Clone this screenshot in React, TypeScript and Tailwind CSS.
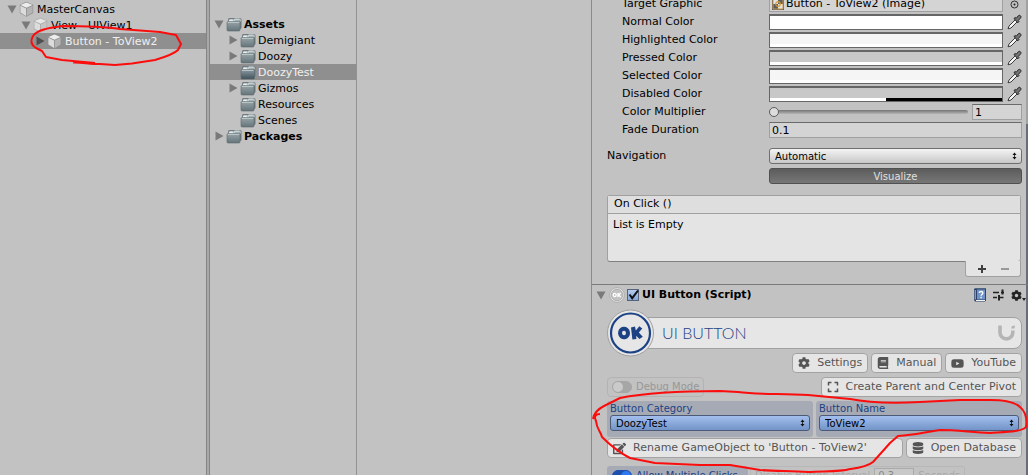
import React, { useState } from "react";
import { FaBook, FaCog, FaDatabase, FaEdit, FaExpand, FaYoutube } from "react-icons/fa";

function Arrow({ open, dark }: { open?: boolean; dark?: boolean }) {
  return (
    <svg viewBox="0 0 10 10" className={`size-[10px] shrink-0 ${dark ? "fill-[#4f4f4f]" : "fill-[#7a7a7a]"}`} aria-hidden="true">
      {open ? <path d="M0.5 1.5h9L5 9.5z" /> : <path d="M1.5 0.5v9L9.5 5z" />}
    </svg>
  );
}

function Cube({ faded }: { faded?: boolean }) {
  return (
    <svg viewBox="0 0 16 16" className="size-4 shrink-0" aria-hidden="true">
      <path d="M7.500 0.800l6.700 2.900v8.300l-6.700 3.800L0.800 12V3.700z" fill={faded ? "#a8a8a8" : "#8e8e8e"} />
      <path d="M7.500 1.500l6 2.500-6 2.800-6-2.800z" fill={faded ? "#e6e6e6" : "#ededed"} />
      <path d="M1.400 4.700l5.700 2.700v7.500l-5.700-3.300z" fill="#dcdcdc" />
      <path d="M13.600 4.700L7.900 7.400v7.500l5.700-3.300z" fill={faded ? "#c6c6c6" : "#b4b4b4"} />
    </svg>
  );
}

function Folder({ open }: { open?: boolean }) {
  return (
    <svg viewBox="0 0 16 16" className="size-4 shrink-0" aria-hidden="true">
      <defs>
        <linearGradient id="folderFill" x1="0" y1="0" x2="0" y2="1">
          <stop offset="0" stopColor="#98a5a8" />
          <stop offset="1" stopColor="#64747a" />
        </linearGradient>
        <linearGradient id="folderOpenFill" x1="0" y1="0" x2="0" y2="1">
          <stop offset="0" stopColor="#8a9ba3" />
          <stop offset="1" stopColor="#41525b" />
        </linearGradient>
      </defs>
      <rect x="2" y="2" width="13.500" height="11" rx="1.500" fill="#6d7a7f" />
      <path d="M3 4.500L4 3h3.500l1-.5h5.500l1 .8v2.200H3z" fill="#a5b0b3" />
      <path d="M2.500 5.500L3.500 3.500h3L7.500 5.500z" fill="#e6ebec" />
      <path d="M7.500 5.500L9 3.200h4.500" fill="none" stroke="#d6dddf" />
      <rect x="1" y="5.500" width={open ? "13.500" : "13"} height="9.500" rx="1" fill={open ? "url(#folderOpenFill)" : "url(#folderFill)"} stroke="#5a686d" strokeWidth="0.600" />
      <path d="M1.800 6.300h11.500" stroke="#c3cdcf" strokeWidth="1" />
    </svg>
  );
}

function Pipette() {
  return (
    <button type="button" aria-label="Pick color" className="flex h-4 w-[15px] shrink-0 items-center justify-center">
      <svg viewBox="0 0 15 16" className="h-4 w-[15px]" aria-hidden="true">
        <path d="M1 14.800l1-2.800 6.500-6.500 2 2L4 14z" fill="#f6f6f6" stroke="#3b3b3b" strokeWidth="1" />
        <path d="M7 4.500l1.200-1 1 .8 2.300-2.700c1-1 3.300.7 2.200 2.200L11.200 6.500l.8 1-1.200 1.300z" fill="#777" stroke="#222" strokeWidth="1" />
      </svg>
    </button>
  );
}

function UpDown() {
  return (
    <svg viewBox="0 0 5 8" className="pointer-events-none absolute top-1 right-[5px] h-2 w-[5px]" aria-hidden="true">
      <path d="M0.500 3L2.500 0.500 4.500 3zM0.500 5L2.500 7.500 4.500 5z" fill="#111" />
      <path d="M2.500 2v4" stroke="#111" strokeWidth="0.800" />
    </svg>
  );
}

function Dropdown({ id, value, blue }: { id: string; value: string; blue?: boolean }) {
  return (
    <div className="relative w-full">
      <select
        id={id}
        defaultValue={value}
        className={`block h-4 w-full appearance-none rounded-[3px] border px-[5px] text-[10px] leading-[13px] text-black ${
          blue
            ? "border-[#4c5a77] bg-linear-to-b from-[#a3bfee] to-[#7394c8]"
            : "border-[#6f6f6f] bg-linear-to-b from-[#f4f4f4] to-[#c8c8c8]"
        }`}
      >
        <option>{value}</option>
      </select>
      <UpDown />
    </div>
  );
}

function Row({ label, id, children }: { label: string; id: string; children: React.ReactNode }) {
  return (
    <div className="flex h-4 items-center">
      <label htmlFor={id} className="w-[147px] shrink-0 leading-[18px]">
        {label}
      </label>
      <div className="flex min-w-0 flex-1 items-center gap-1">{children}</div>
    </div>
  );
}

const fieldBox = "h-4 border border-[#a0a0a0] border-t-[#6a6a6a] bg-[#d4d4d4] px-[2px] leading-[14px]";

const colors = [
  { label: "Normal Color", fill: "bg-white", alpha: "w-full" },
  { label: "Highlighted Color", fill: "bg-[#f5f5f5]", alpha: "w-full" },
  { label: "Pressed Color", fill: "bg-[#c8c8c8]", alpha: "w-full" },
  { label: "Selected Color", fill: "bg-[#f5f5f5]", alpha: "w-full" },
  { label: "Disabled Color", fill: "bg-[#c8c8c8]", alpha: "w-1/2" },
];

function ColorField({ id, fill, alpha }: { id: string; fill: string; alpha: string }) {
  return (
    <>
      <button
        id={id}
        type="button"
        className={`flex h-4 min-w-0 flex-1 flex-col justify-end border border-t-2 border-[#666] ${fill}`}
      >
        <span className="block h-[3px] w-full bg-black">
          <span className={`block h-full bg-white ${alpha}`} />
        </span>
      </button>
      <Pipette />
    </>
  );
}

function PillButton({ icon, children, className = "" }: { icon: React.ReactNode; children: React.ReactNode; className?: string }) {
  return (
    <button
      type="button"
      className={`flex h-5 items-center gap-[7px] rounded-[4px] border border-[#a3a3a3] bg-[#e5e5e5] px-[5px] text-[11px] leading-4 whitespace-nowrap text-[#555] ${className}`}
    >
      {icon}
      {children}
    </button>
  );
}

function TreeRow({
  label,
  icon,
  state,
  indent,
  bold,
  selected,
}: {
  label: string;
  icon: React.ReactNode;
  state?: "open" | "closed";
  indent: string;
  bold?: boolean;
  selected?: boolean;
}) {
  return (
    <li className={`flex h-4 items-center whitespace-nowrap ${indent} ${bold ? "font-bold" : ""} ${selected ? "bg-[#8f8f8f] text-[#f0f0f0]" : ""}`}>
      <span className="flex w-3 shrink-0">{state && <Arrow open={state === "open"} dark={selected} />}</span>
      {icon}
      <span className="ml-[2px] pt-px">{label}</span>
    </li>
  );
}

function Hierarchy() {
  return (
    <nav className="relative w-[206px] shrink-0 pt-px" aria-label="Hierarchy">
      <ul>
        <TreeRow label="MasterCanvas" icon={<Cube />} state="open" indent="pl-[7px]" />
        <TreeRow label="View - UIView1" icon={<Cube faded />} state="open" indent="pl-[21px]" />
        <TreeRow label="Button - ToView2" icon={<Cube />} state="closed" indent="pl-[35px]" selected />
      </ul>
      <svg viewBox="0 0 206 80" className="pointer-events-none absolute top-0 left-0 h-20 w-[206px]" aria-hidden="true">
        <path
          d="M73 62.500C80 62 90 64 100 64L115 65 132 63.500 155 60C165 57 174 54 178 50L181 44 176 35 160 32 120 29C100 26 85 26 62 26C48 28 37 30 33 36C30 41 31 45 36 48L42 51 46 57 62 60 95 63"
          fill="none"
          stroke="#fb0d0d"
          strokeWidth="2"
          strokeLinejoin="round"
        />
      </svg>
    </nav>
  );
}

function Project() {
  return (
    <nav className="w-[147px] shrink-0 border-r border-[#929292] pt-4" aria-label="Project">
      <ul>
        <TreeRow label="Assets" icon={<Folder />} state="open" indent="pl-1" bold />
        <TreeRow label="Demigiant" icon={<Folder />} state="closed" indent="pl-[18px]" />
        <TreeRow label="Doozy" icon={<Folder />} state="closed" indent="pl-[18px]" />
        <TreeRow label="DoozyTest" icon={<Folder open />} indent="pl-[18px]" selected />
        <TreeRow label="Gizmos" icon={<Folder />} state="closed" indent="pl-[18px]" />
        <TreeRow label="Resources" icon={<Folder />} indent="pl-[18px]" />
        <TreeRow label="Scenes" icon={<Folder />} indent="pl-[18px]" />
        <TreeRow label="Packages" icon={<Folder />} state="closed" indent="pl-1" bold />
      </ul>
    </nav>
  );
}

function ButtonSettings() {
  return (
    <section className="pr-[6px] pl-[30px]">
      <div className="-mt-1 flex flex-col gap-[2px]">
        <Row label="Target Graphic" id="target">
          <button id="target" type="button" className={`flex min-w-0 flex-1 items-center gap-[2px] ${fieldBox}`}>
            <svg viewBox="0 0 12 12" className="size-3 shrink-0" aria-hidden="true">
              <path d="M0 0h12v12H0z" fill="#5d5d5d" />
              <path d="M1 1h5v5H1zM6 6h5v5H6z" fill="#e3e3e3" />
              <path d="M1 1h10v10H1z" fill="none" stroke="#c9974a" strokeWidth="1" />
              <circle cx="6" cy="6" r="2.300" fill="none" stroke="#d79a35" strokeWidth="1.200" />
            </svg>
            Button - ToView2 (Image)
          </button>
          <button type="button" aria-label="Select object" className="flex w-[15px] shrink-0 justify-center">
            <svg viewBox="0 0 9 9" className="size-[9px]" aria-hidden="true">
              <circle cx="4.500" cy="4.500" r="3.500" fill="none" stroke="#333" />
              <circle cx="4.500" cy="4.500" r="1" fill="#222" />
            </svg>
          </button>
        </Row>
        {colors.map((c) => (
          <Row key={c.label} label={c.label} id={c.label}>
            <ColorField id={c.label} fill={c.fill} alpha={c.alpha} />
          </Row>
        ))}
        <Row label="Color Multiplier" id="multiplier">
          <input
            id="multiplier"
            type="range"
            min="1"
            max="5"
            defaultValue="1"
            className="h-[10px] min-w-0 flex-1 appearance-none bg-transparent [&::-webkit-slider-runnable-track]:h-1 [&::-webkit-slider-runnable-track]:rounded-full [&::-webkit-slider-runnable-track]:bg-linear-to-b [&::-webkit-slider-runnable-track]:from-[#757575] [&::-webkit-slider-runnable-track]:to-[#b5b5b5] [&::-webkit-slider-thumb]:-mt-[3px] [&::-webkit-slider-thumb]:size-[10px] [&::-webkit-slider-thumb]:appearance-none [&::-webkit-slider-thumb]:rounded-full [&::-webkit-slider-thumb]:border [&::-webkit-slider-thumb]:border-[#5c5c5c] [&::-webkit-slider-thumb]:bg-[#dcdcdc]"
          />
          <input aria-label="Color multiplier value" defaultValue="1" className={`w-[50px] shrink-0 ${fieldBox}`} />
        </Row>
        <Row label="Fade Duration" id="fade">
          <input id="fade" defaultValue="0.1" className={`w-full ${fieldBox}`} />
        </Row>
      </div>
    </section>
  );
}

function Navigation() {
  return (
    <section className="mt-[10px] flex flex-col gap-1 pr-[6px] pl-[15px]">
      <div className="flex items-center">
        <label htmlFor="navigation" className="w-[162px] shrink-0 leading-4">
          Navigation
        </label>
        <Dropdown id="navigation" value="Automatic" />
      </div>
      <button
        type="button"
        className="ml-[162px] h-4 rounded-[3px] border border-[#505050] bg-linear-to-b from-[#5c5c5c] to-[#777] text-[10px] leading-4 text-[#e0e0e0]"
      >
        Visualize
      </button>
    </section>
  );
}

function ClickList() {
  return (
    <section className="mt-[11px] pr-[7px] pl-[15px]">
      <div className="rounded-[3px] border border-[#a0a0a0] border-b-[#808080] bg-[#e4e4e4]">
        <h2 className="h-[18px] border-b border-[#a0a0a0] bg-[#dedede] px-[6px] leading-4">On Click ()</h2>
        <p className="h-[47px] px-[5px] pt-[3px] leading-4">List is Empty</p>
      </div>
      <div className="-mt-px ml-auto flex h-4 w-14 items-center justify-around rounded-b-[3px] border border-t-0 border-[#a0a0a0] bg-[#e4e4e4] px-1">
        <button type="button" aria-label="Add">
          <svg viewBox="0 0 8 8" className="size-2" aria-hidden="true">
            <path d="M3 0h2v3h3v2H5v3H3V5H0V3h3z" fill="#3f3f3f" />
          </svg>
        </button>
        <button type="button" aria-label="Remove">
          <svg viewBox="0 0 8 8" className="size-2" aria-hidden="true">
            <path d="M0 3h8v2H0z" fill="#999" />
          </svg>
        </button>
      </div>
    </section>
  );
}

function ScriptHeader() {
  const [enabled, setEnabled] = useState(true);
  return (
    <header className="mt-[7px] flex h-[21px] items-center border-t border-[#7a7a7a] pr-[2px] pl-1">
      <Arrow open />
      <svg viewBox="0 0 16 16" className="ml-[3px] size-4" aria-hidden="true">
        <circle cx="8" cy="8" r="7.300" fill="#e8e8e8" stroke="#a6a6a6" strokeWidth="0.800" />
        <circle cx="8" cy="8" r="5.700" fill="#c2c2c2" stroke="#a6a6a6" strokeWidth="0.800" />
        <ellipse cx="5.700" cy="8" rx="1.500" ry="1.600" fill="none" stroke="#fff" strokeWidth="1.300" />
        <path d="M9 6v4M11.700 6L9.500 8l2.300 2" fill="none" stroke="#fff" strokeWidth="1.300" />
      </svg>
      <label className="relative ml-[2px] flex items-center gap-[3px] font-bold">
        <input
          type="checkbox"
          checked={enabled}
          onChange={() => setEnabled(!enabled)}
          className="size-3 appearance-none border border-[#56637a] bg-linear-to-b from-[#b5cbee] to-[#86a7d8]"
        />
        {enabled && (
          <svg viewBox="0 0 12 12" className="pointer-events-none absolute left-0 size-3" aria-hidden="true">
            <path d="M2.500 5.500l2.700 3.700L11 1.500" fill="none" stroke="#111" strokeWidth="2" />
          </svg>
        )}
        UI Button (Script)
      </label>
      <div className="ml-auto flex items-center gap-[6px]">
        <button type="button" aria-label="Help">
          <svg viewBox="0 0 14 14" className="size-[14px]" aria-hidden="true">
            <path d="M1 1l1-.7h11v12l-1 1.300H2L1 12z" fill="#2d4367" />
            <path d="M4 1.500h8v10H4z" fill="#6f94c8" />
            <path d="M2.200 2v9.500" stroke="#aebfd8" />
            <path d="M3 12.500h9" stroke="#f1f1f1" />
            <path d="M6.300 5c0-2 3.600-2 3.600 0 0 1.400-1.800 1.300-1.800 2.700M8.100 8.800v1.400" fill="none" stroke="#fff" strokeWidth="1.300" />
          </svg>
        </button>
        <button type="button" aria-label="Presets">
          <svg viewBox="0 0 12 12" className="size-3" aria-hidden="true">
            <path d="M0 3.500h6M8 3.500h3M0 8.500h4M5.500 8.500h5" fill="none" stroke="#222" strokeWidth="1.700" />
            <path d="M9.500 0.500v5M6 6v5.500" fill="none" stroke="#222" strokeWidth="2" />
          </svg>
        </button>
        <button type="button" aria-label="Component menu" className="flex items-end">
          <FaCog className="size-[11px] text-[#222]" />
          <svg viewBox="0 0 4 3" className="h-[3px] w-1" aria-hidden="true">
            <path d="M0 0h4L2 3z" fill="#222" />
          </svg>
        </button>
      </div>
    </header>
  );
}

function Banner() {
  return (
    <div className="mt-1 flex h-12 items-center">
      <svg viewBox="0 0 48 48" className="z-10 size-12 shrink-0" aria-hidden="true">
        <circle cx="23.500" cy="24" r="23" fill="#e6e6e6" stroke="#a0a0a0" />
        <circle cx="23.500" cy="24" r="19.500" fill="none" stroke="#1c4285" strokeWidth="2.200" />
        <ellipse cx="17" cy="24" rx="4" ry="4.200" fill="#e6e6e6" stroke="#1c4285" strokeWidth="4" transform="rotate(-8 17 24)" />
        <path d="M24 18.500l4-1 .8 4 3.500-4.200 3 2.200-3.500 4 4 4.200-3.300 2.300-3.400-3.300.3 3.400-4 .4z" fill="#1c4285" />
      </svg>
      <div className="-ml-[10px] flex h-8 min-w-0 flex-1 items-center justify-between rounded-r-[8px] border border-[#a0a0a0] bg-[#e6e6e6] pr-[6px] pl-4">
        <h1 className="font-['Lato'] text-[16px] leading-5 font-light text-[#1c4285]">UI BUTTON</h1>
        <svg viewBox="0 0 17 16" className="h-4 w-[17px]" aria-hidden="true">
          <path d="M2 0.500v7a6.300 6.300 0 0 0 12.800 0V5.500" fill="none" stroke="#b5b5b5" strokeWidth="3.600" />
          <path d="M13 3.500L14 1l3-.5-.5 3z" fill="#b5b5b5" />
        </svg>
      </div>
    </div>
  );
}

function Toggle({ on }: { on?: boolean }) {
  return (
    <span className={`relative flex h-3 w-5 shrink-0 rounded-full border ${on ? "justify-end border-[#1c4fae] bg-[#1c4fae]" : "border-[#a6a6a6] bg-[#a6a6a6]"}`}>
      <span className={`size-[10px] rounded-full ${on ? "bg-[#2f78ee]" : "bg-[#cacaca]"}`} />
    </span>
  );
}

function CategoryBox({ label, id, value }: { label: string; id: string; value: string }) {
  return (
    <div className="h-9 min-w-0 flex-1 rounded-[3px] bg-[#a6aab4] px-[3px]">
      <label htmlFor={id} className="block h-[14px] text-[10px] leading-[15px] text-[#1c4285]">
        {label}
      </label>
      <Dropdown id={id} value={value} blue />
    </div>
  );
}

function UIButtonScript() {
  return (
    <section className="pr-[6px] pl-[15px]">
      <Banner />
      <div className="mt-[-4px] flex justify-end gap-[3px]">
        <PillButton icon={<FaCog className="size-3" />}>Settings</PillButton>
        <PillButton icon={<FaBook className="size-3" />}>Manual</PillButton>
        <PillButton icon={<FaYoutube className="size-[13px]" />}>YouTube</PillButton>
      </div>
      <div className="mt-1 flex justify-between">
        <label className="flex h-5 items-center gap-1 rounded-[4px] border border-[#b3b3b3] px-1 text-[10px] text-[#979797]">
          <input type="checkbox" className="sr-only" />
          <Toggle />
          Debug Mode
        </label>
        <PillButton icon={<FaExpand className="size-3" />}>Create Parent and Center Pivot</PillButton>
      </div>
      <div className="mt-1 flex gap-[3px]">
        <CategoryBox label="Button Category" id="category" value="DoozyTest" />
        <CategoryBox label="Button Name" id="name" value="ToView2" />
      </div>
      <div className="mt-px flex gap-[3px]">
        <PillButton className="min-w-0 flex-1" icon={<FaEdit className="size-[13px]" />}>
          Rename GameObject to 'Button - ToView2'
        </PillButton>
        <PillButton icon={<FaDatabase className="size-3" />}>Open Database</PillButton>
      </div>
      <div className="mt-2 flex gap-[2px]">
        <label className="flex h-5 w-[141px] items-center gap-1 rounded-[3px] bg-[#a6aab4] px-[5px] text-[10px] whitespace-nowrap text-[#1c4285]">
          <input type="checkbox" defaultChecked className="sr-only" />
          <Toggle on />
          Allow Multiple Clicks
        </label>
        <label className="flex h-5 items-center gap-1 rounded-[3px] border border-[#b7b7b7] px-1 text-[10px] whitespace-nowrap text-[#a8a8a8]">
          Disable Button Interval
          <input defaultValue="0.3" disabled className="h-4 w-10 border border-[#aaa] bg-[#c8c8c8] px-[3px] text-[#888]" />
          Seconds
        </label>
      </div>
    </section>
  );
}

function Inspector() {
  return (
    <aside className="relative flex w-[437px] shrink-0 border-l border-[#8a8a8a]" aria-label="Inspector">
      <div className="w-full min-w-0">
        <ButtonSettings />
        <Navigation />
        <ClickList />
        <ScriptHeader />
        <UIButtonScript />
      </div>
      <svg viewBox="592 0 436 475" className="pointer-events-none absolute top-0 left-0 z-20 h-[475px] w-[436px] overflow-visible" aria-hidden="true">
        <path
          d="M593 419C594 413 598 409 604 406L620 398C640 394 670 391 720 391L738 392C760 395 785 393 808 395L850 399C870 403 900 403 920 402L960 400 990 400C1005 400 1015 402 1020 407C1026 412 1027 420 1026 427C1022 432 1005 432 990 433C970 432 955 430 940 430C920 433 915 435 898 436L890 443 882 452 873 462C867 467 858 468 850 469C840 472 825 471 808 472C790 471 775 471 760 470L730 465 700 465 655 463 630 458C620 453 611 446 602 437C600 430 597 430 596 421C594 417 595 414 600 414"
          fill="none"
          stroke="#fb0d0d"
          strokeWidth="2"
          strokeLinejoin="round"
        />
      </svg>
    </aside>
  );
}

export default function App() {
  return (
    <main className="flex h-screen overflow-hidden bg-[#c2c2c2] font-['DejaVu_Sans',sans-serif] text-[11px] leading-4 text-black">
      <Hierarchy />
      <div className="w-1 shrink-0 border-x border-[#858585] bg-[#a8a8a8]" />
      <Project />
      <div className="min-w-0 flex-1" />
      <Inspector />
      <div className="-ml-[2px] flex w-[2px] shrink-0 flex-col">
        <div className="h-[124px] bg-[#a2a2a2]" />
        <div className="flex-1 bg-[#686d7b]" />
      </div>
    </main>
  );
}
